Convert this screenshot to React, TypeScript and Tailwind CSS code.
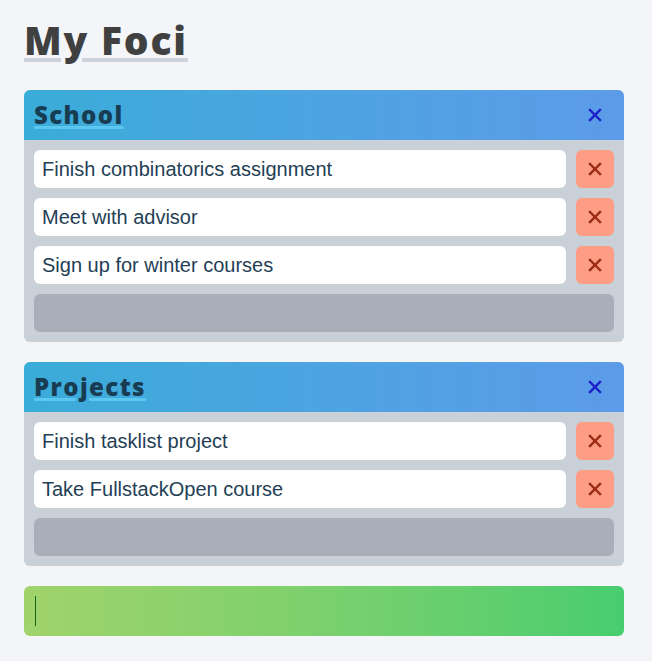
import React from "react";

const XIcon = ({ className, size = 14, stroke = 2.6 }: { className?: string; size?: number; stroke?: number }) => (
  <svg width={size} height={size} viewBox="0 0 14 14" className={className} fill="none">
    <path d="M2 2L12 12M12 2L2 12" stroke="currentColor" strokeWidth={stroke} strokeLinecap="square" />
  </svg>
);

const lists = [
  { title: "School", items: ["Finish combinatorics assignment", "Meet with advisor", "Sign up for winter courses"] },
  { title: "Projects", items: ["Finish tasklist project", "Take FullstackOpen course"] },
];

export default function App() {
  return (
    <div className="min-h-[661px] w-[652px] bg-[#f3f5f9] pl-[24px] pt-[16px]">
      <div className="w-[600px]">
        <h1
          className="text-[39px] leading-[48px] font-extrabold text-[#404040] underline decoration-[#cbd2da] decoration-[4px] underline-offset-[3px]"
          style={{ fontFamily: '"Open Sans", sans-serif', letterSpacing: "1.8px" }}
        >
          My Foci
        </h1>
        <div className="mt-[26px] flex flex-col gap-[20px]">
          {lists.map((l) => (
            <div key={l.title} className="rounded-[6px] overflow-hidden bg-[#c9d0d8]">
              <div className="h-[50px] flex items-center justify-between pl-[10px] pr-[22px] bg-gradient-to-r from-[#39acd9] to-[#5c9be9]">
                <span
                  className="text-[24px] font-extrabold text-[#183c52] underline decoration-[#5cc8ef] decoration-[3px] underline-offset-[2px]"
                  style={{ fontFamily: '"Open Sans", sans-serif', letterSpacing: "1.4px" }}
                >
                  {l.title}
                </span>
                <XIcon className="text-[#1c1fc8]" size={14} stroke={2.4} />
              </div>
              <div className="p-[10px] flex flex-col gap-[10px]">
                {l.items.map((it) => (
                  <div key={it} className="flex gap-[10px]">
                    <div
                      className="flex-1 h-[38px] bg-white rounded-[6px] flex items-center pl-[8px] text-[20px] text-[#1f4055]"
                      style={{ fontFamily: '"Liberation Sans", Arial, sans-serif' }}
                    >
                      {it}
                    </div>
                    <div className="w-[38px] h-[38px] rounded-[6px] bg-[#fe9d86] flex items-center justify-center">
                      <XIcon className="text-[#9b2a12]" size={14} stroke={2.4} />
                    </div>
                  </div>
                ))}
                <div className="h-[38px] rounded-[6px] bg-[#a8afbb]" />
              </div>
            </div>
          ))}
          <div className="h-[50px] rounded-[6px] bg-gradient-to-r from-[#a0d36b] to-[#47cd6f] flex items-center pl-[11px]">
            <div className="w-[1px] h-[30px] bg-[#13641f]" />
          </div>
        </div>
      </div>
    </div>
  );
}
